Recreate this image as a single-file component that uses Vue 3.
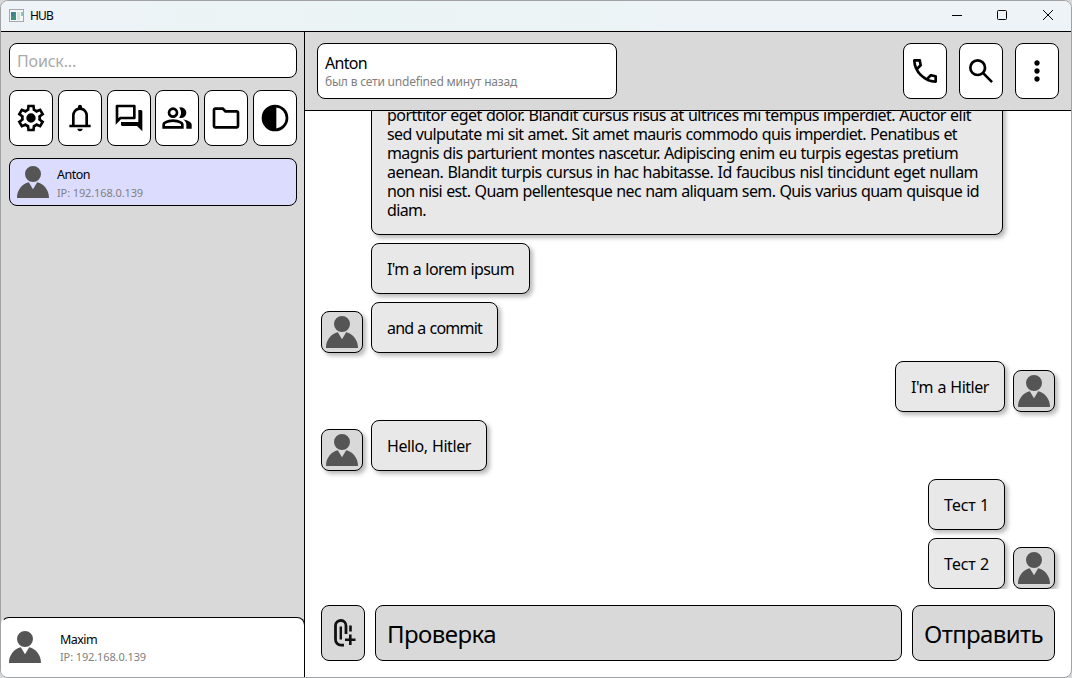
<script setup>
const tools = ['settings', 'bell', 'forum', 'group', 'folder', 'contrast']
const actions = ['call', 'search', 'more']

const icons = {
  settings:
    'm370-80-16-128q-13-5-24.5-12T307-235l-119 50L78-375l103-78q-1-7-1-13.5v-27q0-6.5 1-13.5L78-585l110-190 119 50q11-8 23-15t24-12l16-128h220l16 128q13 5 24.5 12t22.5 15l119-50 110 190-103 78q1 7 1 13.5v27q0 6.5-2 13.5l103 78-110 190-118-50q-11 8-23 15t-24 12L590-80H370Zm70-80h79l14-106q31-8 57.5-23.5T639-327l99 41 39-68-86-65q5-14 7-29.5t2-31.5q0-16-2-31.5t-7-29.5l86-65-39-68-99 42q-22-23-48.5-38.5T533-694l-13-106h-79l-14 106q-31 8-57.5 23.5T321-633l-99-41-39 68 86 64q-5 15-7 30t-2 32q0 16 2 31t7 30l-86 65 39 68 99-42q22 23 48.5 38.5T427-266l13 106ZM480-340a140 140 0 1 0 0-280a140 140 0 1 0 0 280Z',
  bell:
    'M160-200v-80h80v-280q0-83 50-147.5T420-792v-28q0-25 17.5-42.5T480-880q25 0 42.5 17.5T540-820v28q80 20 130 84.5T720-560v280h80v80H160Zm320 120q-33 0-56.5-23.5T400-160h160q0 33-23.5 56.5T480-80ZM320-280h320v-280q0-66-47-113t-113-47q-66 0-113 47t-47 113v280Z',
  forum:
    'M880-80 720-240H280q-33 0-40-40v-80h520v-360h80q40 7 40 40v600ZM160-473l47-47h393v-280H160v327ZM80-280v-560q0-40 40-40h520q40 0 40 40v360q0 40-40 40H240L80-280Z',
  group:
    'M40-160v-112q0-34 17.5-62.5T104-378q62-31 126-46.5T360-440q66 0 130 15.5T616-378q29 15 46.5 43.5T680-272v112H40Zm720 0v-120q0-44-24.5-84.5T666-434q51 6 96 20.5t84 35.5q36 20 55 44.5t19 53.5v120H760ZM360-480q-66 0-113-47t-47-113q0-66 47-113t113-47q66 0 113 47t47 113q0 66-47 113t-113 47Zm400-160q0 66-47 113t-113 47q-11 0-28-2.5t-28-5.5q27-32 41.5-71t14.5-81q0-42-14.5-81T544-792q14-5 28-6.5t28-1.5q66 0 113 47t47 113ZM120-240h480v-32q0-11-5.5-20T580-306q-54-27-109-40.5T360-360q-56 0-111 13.5T140-306q-9 5-14.5 14t-5.5 20v32Zm240-320q33 0 56.5-23.5T440-640q0-33-23.5-56.5T360-720q-33 0-56.5 23.5T280-640q0 33 23.5 56.5T360-560Z',
  folder:
    'M160-160q-33 0-56.5-23.5T80-240v-480q0-33 23.5-56.5T160-800h240l80 80h320q33 0 56.5 23.5T880-640v400q0 33-23.5 56.5T800-160H160Zm0-80h640v-400H447l-80-80H160v480Z',
  contrast:
    'M480-80a400 400 0 1 1 0-800a400 400 0 1 1 0 800Zm40-83q119-15 199.500-104.500T800-480q0-123-80.500-212.500T520-797v634Z',
  call:
    'M798-120q-125 0-247-54.500T329-329Q229-429 174.500-551T120-798q0-18 12-30t30-12h162q14 0 25 9.500t13 22.500l26 140q2 16-1 27t-11 19l-97 98q20 37 47.500 71.500T387-386q31 31 65 57.500t72 48.500l94-94q9-9 23.500-13.500T670-390l138 28q14 4 23 14.500t9 23.500v162q0 18-12 30t-30 12ZM241-600l66-66-17-94h-89q5 41 14 81t26 79Zm358 358q39 17 79.500 27t81.500 13v-88l-94-19-67 67Z',
  search:
    'M784-120 532-372q-30 24-69 38t-83 14q-109 0-184.500-75.500T120-580q0-109 75.500-184.500T380-840q109 0 184.500 75.500T640-580q0 44-14 83t-38 69l252 252-56 56ZM380-400q75 0 127.500-52.500T560-580q0-75-52.500-127.500T380-760q-75 0-127.500 52.500T200-580q0 75 52.500 127.500T380-400Z',
  more:
    'M480-160q-33 0-56.500-23.500T400-240q0-33 23.500-56.500T480-320q33 0 56.500 23.500T560-240q0 33-23.500 56.500T480-160Zm0-240q-33 0-56.500-23.500T400-480q0-33 23.500-56.500T480-560q33 0 56.500 23.500T560-480q0 33-23.500 56.500T480-400Zm0-240q-33 0-56.500-23.500T400-720q0-33 23.500-56.500T480-800q33 0 56.500 23.500T560-720q0 33-23.500 56.500T480-640Z',
}

const person = 'M16 0a8 8 0 1 1 0 16a8 8 0 1 1 0-16ZM0 32C0 24 5 18 11.800 16.300L16 23.300L20.200 16.300C27 18 32 24 32 32Z'

const messages = [
  {
    width: 632,
    lines: [
      ['porttitor eget dolor. Blandit cursus risus at ultrices mi tempus imperdiet. Auctor elit', 584],
      ['sed vulputate mi sit amet. Sit amet mauris commodo quis imperdiet. Penatibus et', 570],
      ['magnis dis parturient montes nascetur. Adipiscing enim eu turpis egestas pretium', 571],
      ['aenean. Blandit turpis cursus in hac habitasse. Id faucibus nisl tincidunt eget nullam', 591],
      ['non nisi est. Quam pellentesque nec nam aliquam sem. Quis varius quam quisque id', 592],
      ['diam.', 39],
    ],
  },
  { width: 159, lines: [["I'm a lorem ipsum", 127]] },
  { width: 127, avatar: true, lines: [['and a commit', 95]] },
  { width: 110, mine: true, avatar: true, lines: [["I'm a Hitler", 78]] },
  { width: 116, avatar: true, lines: [['Hello, Hitler', 84]] },
  { width: 77, mine: true, lines: [['Тест 1', 45]] },
  { width: 77, mine: true, avatar: true, lines: [['Тест 2', 45]] },
]

// Spreads the letters of a line so that it takes the given width.
const vFit = {
  mounted(el, { value }) {
    const spacing = (value - el.getBoundingClientRect().width) / el.textContent.length
    el.style.letterSpacing = `${spacing}px`
  },
}
</script>

<template>
  <div class="window">
    <header class="titlebar">
      <svg class="app-icon" width="15" height="13" viewBox="0 0 15 13">
        <rect x=".5" y=".5" width="14" height="12" fill="#f4f5f6" stroke="#a3a8ac" />
        <rect x="2" y="3" width="5" height="8" fill="#42917f" />
        <rect x="2" y="3" width="3" height="4" fill="#4479a0" />
        <rect x="8" y="3" width="3" height="8" fill="#dfe2e5" />
        <rect x="12" y="3" width="2" height="4" fill="#93c4b4" />
      </svg>
      <span v-fit="23" class="app-name">HUB</span>
      <svg class="controls" width="102" height="12" viewBox="0 0 102 12" fill="none" stroke="#000">
        <path d="M0 6.500H10" />
        <rect x="45.500" y="1.500" width="9" height="9" rx="1" />
        <path d="M91 1L101 11M101 1L91 11" />
      </svg>
    </header>

    <div class="body">
      <aside class="sidebar">
        <div class="search"><span v-fit="59">Поиск...</span></div>
        <nav class="tools">
          <button v-for="name in tools" :key="name" class="tile">
            <svg width="32" height="32" viewBox="0 -960 960 960"><path :d="icons[name]" /></svg>
          </button>
        </nav>
        <div class="contact">
          <svg class="person" width="32" height="32" viewBox="0 0 32 32"><path :d="person" /></svg>
          <div class="who">
            <span v-fit="33" class="name">Anton</span>
            <span v-fit="86" class="ip">IP: 192.168.0.139</span>
          </div>
        </div>
        <div class="self">
          <svg class="person" width="32" height="32" viewBox="0 0 32 32"><path :d="person" /></svg>
          <div class="who">
            <span v-fit="37" class="name">Maxim</span>
            <span v-fit="86" class="ip">IP: 192.168.0.139</span>
          </div>
        </div>
      </aside>

      <main class="chat">
        <div class="chat-head">
          <div class="peer">
            <span v-fit="42" class="peer-name">Anton</span>
            <span v-fit="192" class="peer-status">был в сети undefined минут назад</span>
          </div>
          <div class="actions">
            <button v-for="name in actions" :key="name" class="tile">
              <svg width="32" height="32" viewBox="0 -960 960 960"><path :d="icons[name]" /></svg>
            </button>
          </div>
        </div>

        <div class="messages">
          <div v-for="(m, i) in messages" :key="i" class="row" :class="{ mine: m.mine }">
            <div class="slot">
              <div v-if="m.avatar" class="avatar">
                <svg class="person" width="32" height="32" viewBox="0 0 32 32"><path :d="person" /></svg>
              </div>
            </div>
            <div class="bubble" :style="{ width: m.width + 'px' }">
              <div v-for="line in m.lines" :key="line[0]" class="line">
                <span v-fit="line[1]">{{ line[0] }}</span>
              </div>
            </div>
          </div>
        </div>

        <div class="composer">
          <button class="tile grey">
            <svg width="32" height="32" viewBox="0 0 32 32" fill="none" stroke="#111" stroke-width="2.600">
              <path d="M19 17V9a5 5 0 0 0-10.500-.5V22a5.700 5.700 0 0 0 6 6.200h2.500" stroke-width="2.800" />
              <path d="M13.800 9.500V22.500" stroke-width="2.400" />
              <path d="M23.500 8.500v6M23.300 17.500v10.500M18 22.800h10.500" />
            </svg>
          </button>
          <div class="input"><span v-fit="109">Проверка</span></div>
          <button class="send"><span v-fit="119">Отправить</span></button>
        </div>
      </main>
    </div>
  </div>
</template>

<style>
body {
  background: #d5d7d8;
}
</style>

<style scoped>
.window {
  box-sizing: border-box;
  width: 1072px;
  height: 678px;
  border: 1px solid #a0a2a3;
  border-radius: 8px;
  overflow: hidden;
  display: flex;
  flex-direction: column;
  background: #fff;
  color: #000;
  font-family: "Noto Sans", "Open Sans", sans-serif;
}
.window * {
  box-sizing: border-box;
}
span {
  display: inline-block;
  white-space: pre;
}
svg {
  display: block;
  flex: none;
}
.titlebar {
  height: 31px;
  flex: none;
  display: flex;
  align-items: center;
  padding: 0 17px 2px 8px;
  background: linear-gradient(90deg, #eef3f8, #ebf4f4 35%, #eef3f8 75%);
  border-bottom: 1px solid #000;
}
.app-name {
  margin-left: 6px;
  padding-top: 1px;
  font-size: 12px;
  line-height: 16px;
}
.controls {
  margin-left: auto;
}
.body {
  flex: 1;
  min-height: 0;
  display: flex;
}
.sidebar {
  width: 304px;
  flex: none;
  display: flex;
  flex-direction: column;
  background: #d9d9d9;
  border-right: 1px solid #000;
}
.search {
  height: 35px;
  margin: 11px 7px 0 8px;
  padding: 1px 0 0 7px;
  display: flex;
  align-items: center;
  background: #fff;
  border: 1px solid #000;
  border-radius: 8px;
  color: #aaa;
  font-size: 16px;
  line-height: 20px;
}
.tools {
  display: flex;
  justify-content: space-between;
  margin: 12px 7px 0 8px;
}
.tile {
  width: 44px;
  height: 56px;
  padding: 0;
  flex: none;
  display: flex;
  align-items: center;
  justify-content: center;
  background: #fff;
  border: 1px solid #000;
  border-radius: 8px;
}
.contact {
  height: 48px;
  margin: 12px 7px 0 8px;
  padding-left: 7px;
  display: flex;
  align-items: center;
  gap: 8px;
  background: #dcdcff;
  border: 1px solid #000;
  border-radius: 8px;
}
.person {
  fill: #555;
}
.who {
  display: flex;
  flex-direction: column;
  align-items: flex-start;
  padding-top: 4px;
}
.name {
  font-size: 12.500px;
  line-height: 18px;
}
.ip {
  font-size: 11px;
  line-height: 18px;
  color: #808080;
}
.self {
  height: 60px;
  margin-top: auto;
  margin-right: -1px;
  padding: 0 0 1px 7px;
  display: flex;
  align-items: center;
  gap: 19px;
  background: #fff;
  border: 1px solid #000;
  border-bottom: 0;
  border-left-color: #fff;
  border-radius: 8px 8px 0 0;
}
.self .who {
  padding-top: 2px;
}
.self .ip {
  line-height: 16px;
}
.chat {
  flex: 1;
  min-width: 0;
  display: flex;
  flex-direction: column;
}
.chat-head {
  height: 79px;
  flex: none;
  display: flex;
  justify-content: space-between;
  padding: 11px 12px 0;
  background: #d9d9d9;
  border-bottom: 1px solid #000;
}
.peer {
  width: 300px;
  height: 56px;
  padding: 1px 7px 0;
  display: flex;
  flex-direction: column;
  justify-content: center;
  align-items: flex-start;
  background: #fff;
  border: 1px solid #000;
  border-radius: 8px;
}
.peer-name {
  font-size: 16px;
  line-height: 20px;
}
.peer-status {
  font-size: 12px;
  line-height: 17px;
  color: #808080;
}
.actions {
  display: flex;
  gap: 12px;
}
.messages {
  height: 478px;
  flex: none;
  overflow: hidden;
  display: flex;
  flex-direction: column;
  justify-content: flex-end;
  gap: 8px;
  padding: 0 16px;
}
.row {
  flex: none;
  display: flex;
  align-items: flex-end;
  gap: 8px;
}
.row.mine {
  flex-direction: row-reverse;
}
.slot {
  width: 42px;
  flex: none;
}
.avatar {
  width: 42px;
  height: 42px;
  display: flex;
  align-items: center;
  justify-content: center;
  background: #d9d9d9;
  border: 1px solid #000;
  border-radius: 8px;
  box-shadow: 3px 3px 4px rgba(0, 0, 0, 0.27);
}
.bubble {
  padding: 16px 15px 14px;
  background: #e8e8e8;
  border: 1px solid #000;
  border-radius: 8px;
  box-shadow: 3px 3px 4px rgba(0, 0, 0, 0.27);
  font-size: 16px;
  line-height: 19px;
  word-spacing: 0.6px;
}
.line {
  height: 19px;
  white-space: nowrap;
}
.composer {
  display: flex;
  gap: 10px;
  padding: 16px 16px 0;
}
.grey,
.input,
.send {
  background: #d9d9d9;
}
.input,
.send {
  height: 56px;
  display: flex;
  align-items: center;
  border: 1px solid #000;
  border-radius: 8px;
  font-size: 24px;
  line-height: 30px;
}
.input {
  flex: 1;
  padding: 2px 11px 0;
}
.send {
  width: 143px;
  padding: 1px 0 0;
  justify-content: center;
  color: #000;
  font-family: inherit;
}
</style>
